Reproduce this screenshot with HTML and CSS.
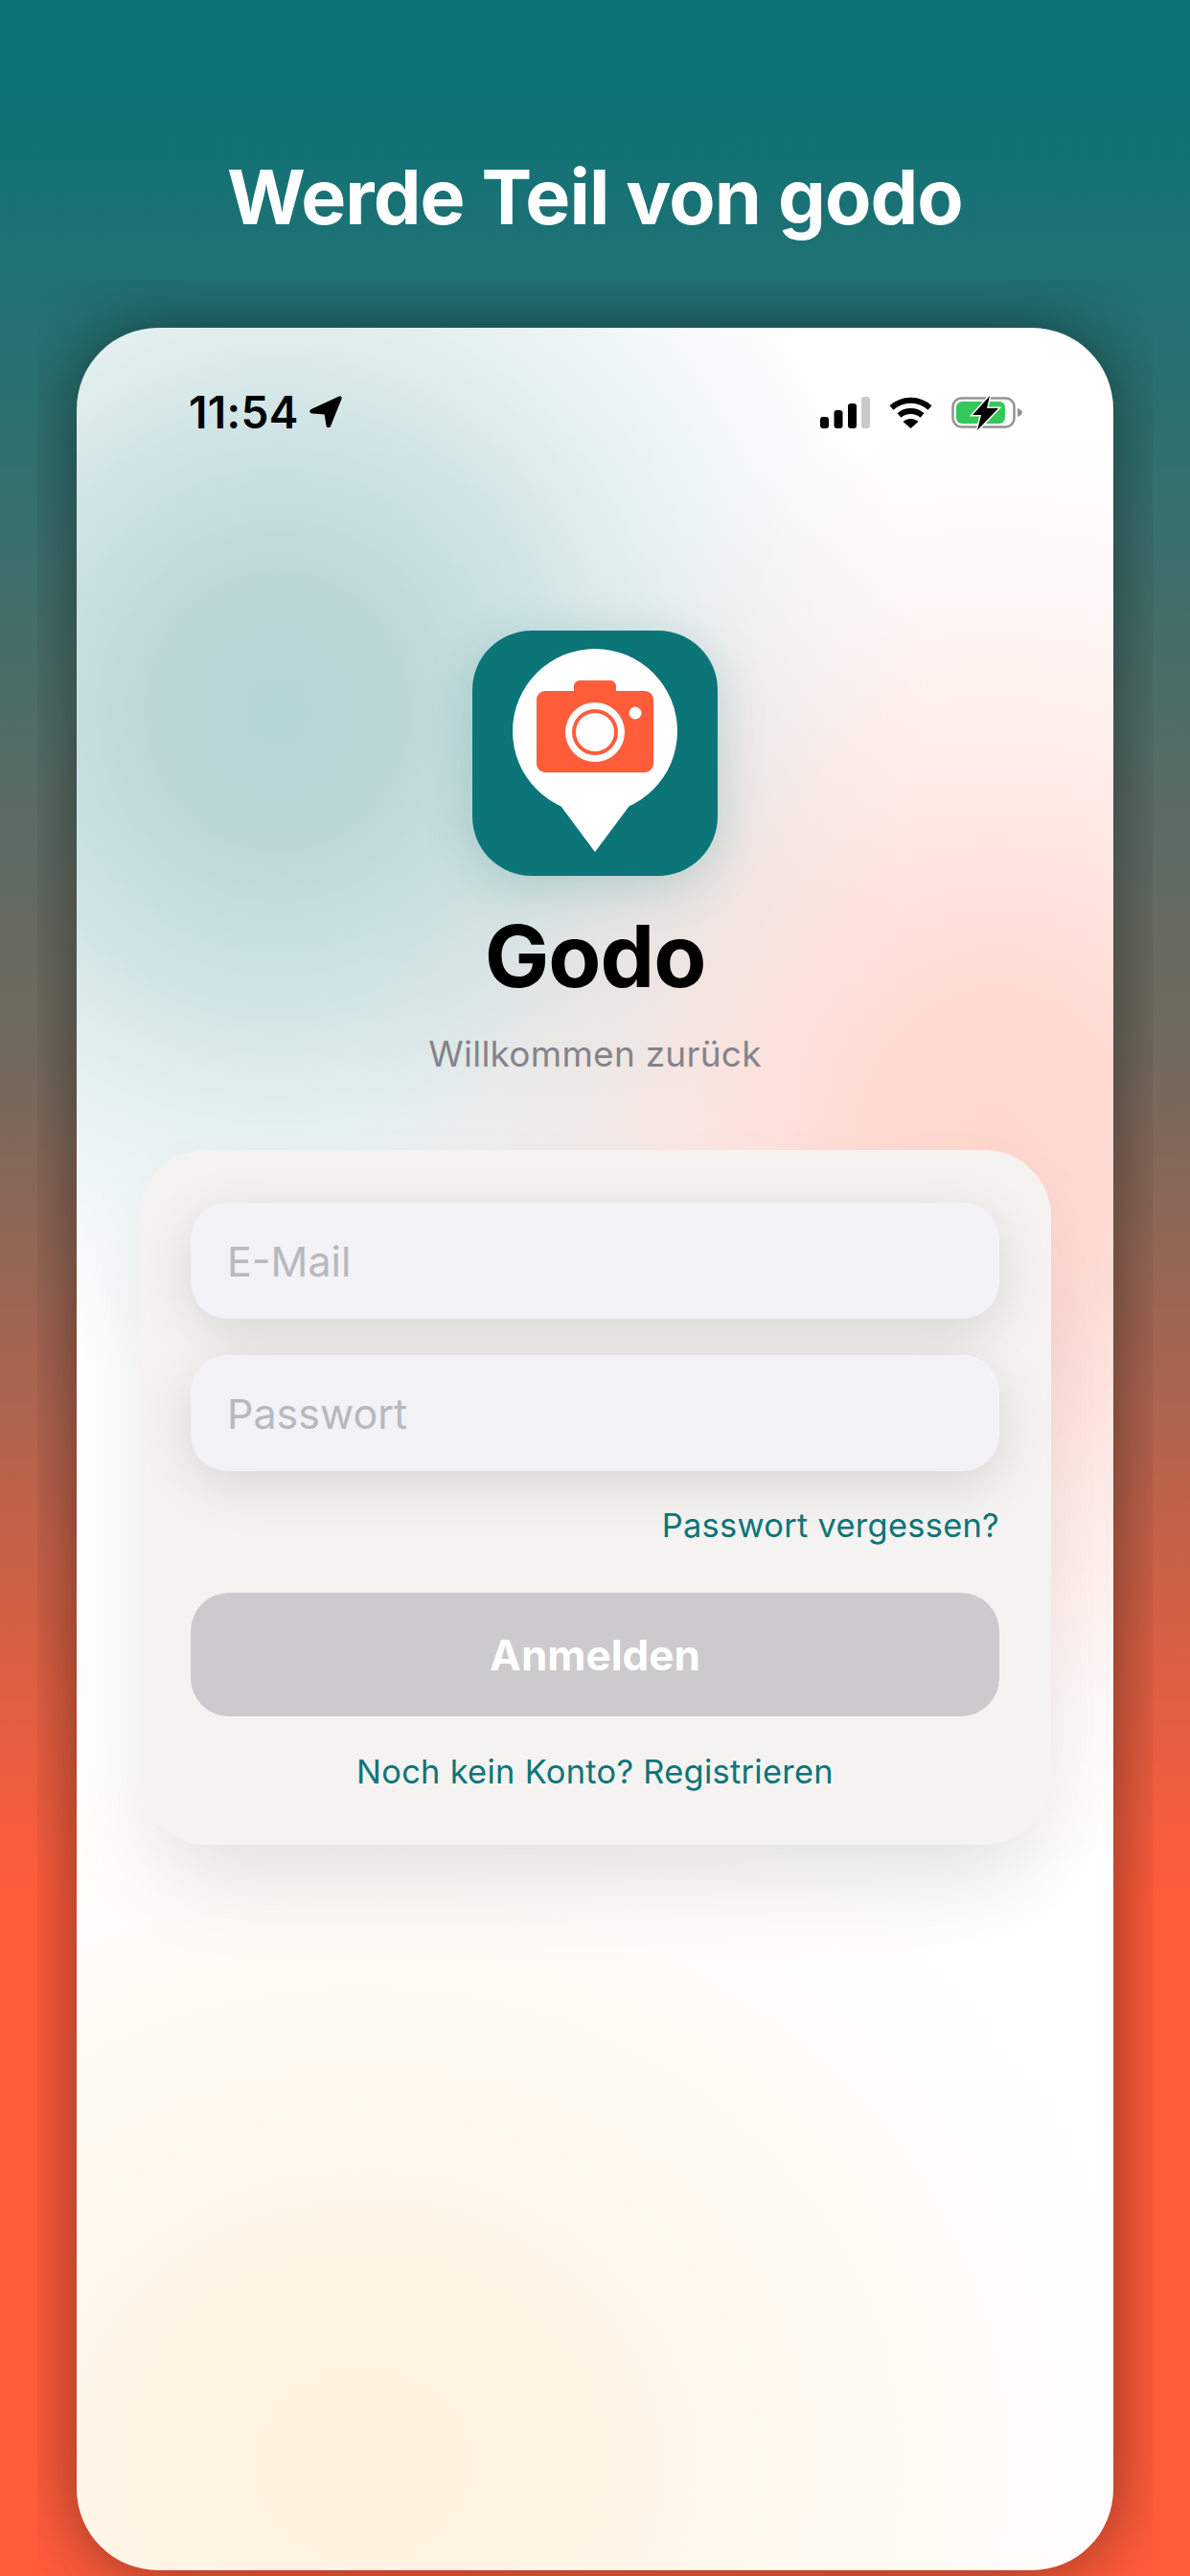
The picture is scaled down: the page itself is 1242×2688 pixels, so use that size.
FILE: index.html
```html
<!DOCTYPE html>
<html lang="de">
<head>
<meta charset="utf-8">
<title>Godo</title>
<link rel="stylesheet" href="styles.css">
</head>
<body>
<main class="page">
  <header class="hero"><h1 class="hero-title">Werde Teil von godo</h1></header>
  <div class="phone-clip">
    <section class="phone">
      <div class="status">
        <div class="status-left">
          <span class="time">11:54</span>
          <svg class="i-arrow" viewBox="0 0 34 34"><path d="M30.5.8C33 0 34.2 1.3 33.4 3.6L22.3 31.3C21.2 34 18 33.8 17.5 31L15.6 19.6 3 18.6C-.2 18.2-.6 15 2.3 13.8Z"/></svg>
        </div>
        <div class="status-right">
          <svg class="i-signal" viewBox="0 0 52 33"><rect x="0" y="21" width="9" height="12" rx="3"/><rect x="14.500" y="14" width="9" height="19" rx="3"/><rect x="29" y="7" width="9" height="26" rx="3"/><rect class="dim" x="43" y="0" width="9" height="33" rx="3"/></svg>
          <svg class="i-wifi" viewBox="0 0 45 33"><path class="arc" d="M2.500 11.500C14 1 31 1 42.500 11.500"/><path class="arc" d="M10.500 19.500C17 13.500 28 13.500 34.500 19.500"/><path d="M14.500 26C19 22 26 22 30.500 26L22.500 33Z"/></svg>
          <svg class="i-batt" viewBox="0 0 74 33"><rect class="batt-frame" x="1.500" y="1.500" width="64" height="30" rx="9"/><rect class="batt-fill" x="5" y="5" width="51" height="23" rx="6"/><path class="batt-nub" d="M69 12C72 13 74 15 74 16.500S72 20 69 21Z"/><path class="batt-bolt" d="M40-1 22 19H31L27 35 49 12H37Z"/></svg>
        </div>
      </div>
      <div class="brand">
        <div class="logo">
          <svg class="logo-art" viewBox="0 0 256 256">
            <circle class="w" cx="128" cy="105" r="86"/>
            <path class="w" d="M90 180H166L128 231Z"/>
            <rect class="o" x="106" y="52" width="44" height="24" rx="6"/>
            <rect class="o" x="67" y="63" width="122" height="85" rx="9"/>
            <circle class="w" cx="128" cy="106" r="31"/>
            <circle class="o" cx="128" cy="106" r="24"/>
            <circle class="w" cx="128" cy="106" r="20"/>
            <circle class="w" cx="170" cy="86" r="6.500"/>
          </svg>
        </div>
        <h2 class="brand-name">Godo</h2>
        <p class="brand-sub">Willkommen zurück</p>
      </div>
      <form class="card">
        <div class="field">E-Mail</div>
        <div class="field">Passwort</div>
        <a class="link link-forgot">Passwort vergessen?</a>
        <div class="submit">Anmelden</div>
        <a class="link link-register">Noch kein Konto? Registrieren</a>
      </form>
    </section>
  </div>
</main>
</body>
</html>
```
FILE: styles.css
```css
* { box-sizing: border-box; margin: 0; padding: 0; }
html, body { width: 1242px; height: 2688px; overflow: hidden; }
body { font-family: Inter, "Liberation Sans", sans-serif; }
.page {
  width: 1242px; height: 2688px;
  background: linear-gradient(180deg, #0d7377 0, #0d7377 80px, #366f6d 535px, #566c65 803px, #73695d 1110px, #af644e 1473px, #db5f43 1740px, #ff5c3a 1980px);
  display: flex; flex-direction: column;
}
.hero { height: 342px; padding-top: 68px; display: flex; align-items: center; justify-content: center; }
.hero-title { font-size: 79px; font-weight: 700; color: #fff; letter-spacing: -.9px; line-height: 100px; }
.phone-clip { margin: 0 39px; padding: 0 41px; clip-path: inset(-50px 0 -20px 0); }
.phone {
  width: 1082px; height: 2340px; border-radius: 85px;
  box-shadow: 0 0 70px rgba(0,0,0,.46);
  background:
    radial-gradient(ellipse 680px 720px at 210px 400px, rgba(13,115,119,.3) 0, rgba(13,115,119,.28) 20%, rgba(13,115,119,.2) 40%, rgba(13,115,119,.1) 62%, rgba(13,115,119,.03) 84%, rgba(13,115,119,0) 100%),
    radial-gradient(ellipse 680px 760px at 960px 850px, rgba(255,92,58,.25) 0, rgba(255,92,58,.21) 25%, rgba(255,92,58,.12) 50%, rgba(255,92,58,.04) 78%, rgba(255,92,58,0) 100%),
    radial-gradient(ellipse 900px 800px at 300px 2230px, rgba(255,200,110,.24) 0, rgba(255,200,110,.18) 25%, rgba(255,200,110,.09) 55%, rgba(255,200,110,.02) 85%, rgba(255,200,110,0) 100%),
    #fff;
  display: flex; flex-direction: column;
}
.status { height: 176px; padding: 0 95px 0 117px; display: flex; align-items: center; justify-content: space-between; }
.status-left { display: flex; align-items: center; gap: 11px; }
.time { font-size: 46px; font-weight: 600; line-height: 50px; color: #000; letter-spacing: .3px; }
.i-arrow { width: 34px; height: 34px; fill: #000; }
.status-right { display: flex; align-items: center; }
.i-signal { width: 52px; height: 33px; fill: #000; margin-right: 20px; }
.i-signal .dim { fill: #c9c9c9; }
.i-wifi { width: 45px; height: 33px; fill: #000; margin-right: 20px; }
.i-wifi .arc { fill: none; stroke: #000; stroke-width: 6; }
.i-batt { width: 74px; height: 33px; overflow: visible; }
.batt-frame { fill: none; stroke: #929292; stroke-width: 2.5; }
.batt-fill { fill: #34c759; }
.batt-nub { fill: #929292; }
.batt-bolt { fill: #000; stroke: #fff; stroke-width: 3; paint-order: stroke; }
.brand { padding-top: 140px; display: flex; flex-direction: column; align-items: center; }
.logo {
  width: 256px; height: 256px; border-radius: 62px; background: #0b7578;
  box-shadow: 0 10px 50px rgba(13,115,119,.22);
}
.logo-art { display: block; width: 256px; height: 256px; }
.logo-art .w { fill: #fff; }
.logo-art .o { fill: #ff5c3a; }
.brand-name { margin-top: 30px; font-size: 90px; line-height: 108px; font-weight: 700; color: #000; letter-spacing: -1px; }
.brand-sub { margin-top: 25px; font-size: 37px; line-height: 46px; color: #84848a; letter-spacing: .25px; }
.card {
  margin: 77px 65px 0; padding: 55px 54px 0; height: 725px;
  border-radius: 70px; background: #f5f3f1;
  box-shadow: 0 50px 100px -20px rgba(0,0,0,.13);
  display: flex; flex-direction: column;
}
.field {
  height: 121px; border-radius: 38px; background: #f2f2f7; padding-left: 38px;
  display: flex; align-items: center;
  font-size: 43px; color: #b9b8be;
  box-shadow: 0 14px 56px rgba(0,0,0,.12);
}
.field + .field { margin-top: 38px; }
.link { display: block; font-size: 34.4px; line-height: 44px; color: #0b7578; letter-spacing: .3px; }
.link-forgot { margin-top: 35px; text-align: right; }
.submit {
  margin-top: 48px; height: 129px; border-radius: 40px; background: #cccacc;
  display: flex; align-items: center; justify-content: center;
  font-size: 44px; font-weight: 700; color: #fff;
}
.link-register { margin-top: 36px; text-align: center; }
```
